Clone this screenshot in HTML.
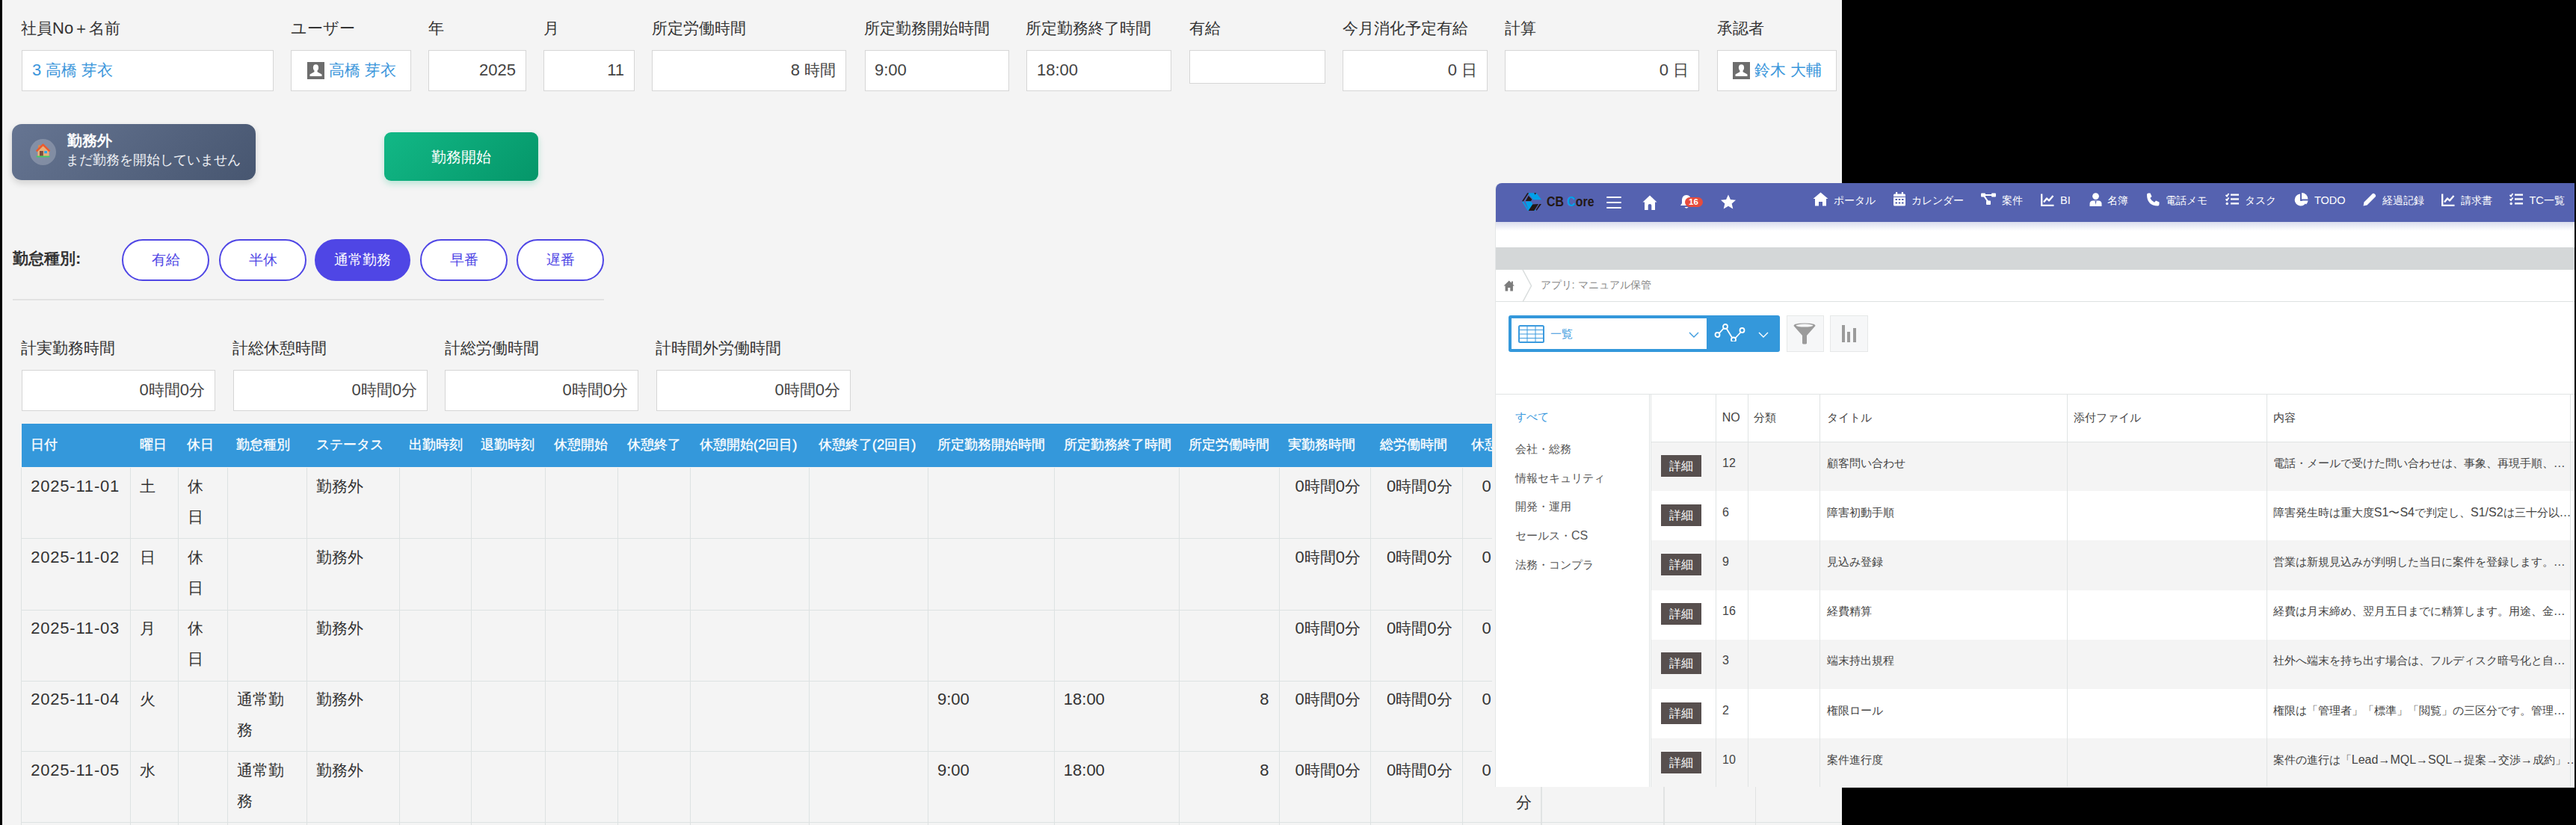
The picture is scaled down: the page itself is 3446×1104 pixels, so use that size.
<!DOCTYPE html>
<html><head><meta charset="utf-8">
<style>
*{box-sizing:border-box;margin:0;padding:0}
html,body{width:3446px;height:1104px;overflow:hidden;background:#f4f4f4;font-family:"Liberation Sans",sans-serif;color:#333}
.a{position:absolute;white-space:nowrap}
.lbl{position:absolute;font-size:22px;line-height:26px;color:#333;white-space:nowrap}
.inp{position:absolute;background:#fff;border:1.5px solid #d6d6d6;font-size:22px;line-height:26px;color:#444;white-space:nowrap}
.blue{color:#3b96db}
.uic{position:absolute;width:23px;height:23px;background:#6f6f6f}
.pill{position:absolute;top:320px;height:56px;width:117px;border:2.5px solid #4f46e5;border-radius:28px;color:#4f46e5;font-size:20px;line-height:51px;text-align:center;background:#fff}
.th{position:absolute;top:568px;height:57px;background:#3498db}
.tht{position:absolute;top:586px;font-size:18px;line-height:22px;color:#fff;white-space:nowrap}
.vl{position:absolute;width:1.5px;background:#e1e3e3}
.hl{position:absolute;height:1.5px;background:#e1e3e3}
.td{position:absolute;font-size:22px;line-height:41px;color:#333;white-space:nowrap}
.j{font-size:0.95em}
</style></head><body>
<!-- left black strip -->
<div class="a" style="left:0;top:0;width:3px;height:1104px;background:#000"></div>

<!-- top labels -->
<div class="lbl" style="left:28px;top:25px"><span class="j">社員</span>No<span class="j">＋名前</span></div>
<div class="lbl" style="left:389px;top:25px"><span class="j">ユーザー</span></div>
<div class="lbl" style="left:573px;top:25px"><span class="j">年</span></div>
<div class="lbl" style="left:727px;top:25px"><span class="j">月</span></div>
<div class="lbl" style="left:872px;top:25px"><span class="j">所定労働時間</span></div>
<div class="lbl" style="left:1156px;top:25px"><span class="j">所定勤務開始時間</span></div>
<div class="lbl" style="left:1372px;top:25px"><span class="j">所定勤務終了時間</span></div>
<div class="lbl" style="left:1591px;top:25px"><span class="j">有給</span></div>
<div class="lbl" style="left:1796px;top:25px"><span class="j">今月消化予定有給</span></div>
<div class="lbl" style="left:2013px;top:25px"><span class="j">計算</span></div>
<div class="lbl" style="left:2297px;top:25px"><span class="j">承認者</span></div>

<!-- top inputs -->
<div class="inp" style="left:29px;top:67px;width:337px;height:55px"><span class="a blue" style="left:13px;top:13px">3 <span class="j">高橋</span> <span class="j">芽衣</span></span></div>
<div class="inp" style="left:389px;top:67px;width:161px;height:55px"><svg class="a" style="left:20.8px;top:14.5px" width="23" height="23" viewBox="0 0 23 23"><rect width="23" height="23" fill="#6d6d6d"/><ellipse cx="11.5" cy="7.6" rx="3.6" ry="4.4" fill="#fff"/><path d="M9.6 11 L13.4 11 L13.6 13.3 L19.5 16.5 L19.5 19 L3.5 19 L3.5 16.5 L9.4 13.3 Z" fill="#fff"/></svg><span class="a blue" style="left:50px;top:13px"><span class="j">高橋</span> <span class="j">芽衣</span></span></div>
<div class="inp" style="left:573px;top:67px;width:131px;height:55px"><span class="a" style="right:13px;top:13px">2025</span></div>
<div class="inp" style="left:727px;top:67px;width:122px;height:55px"><span class="a" style="right:13px;top:13px">11</span></div>
<div class="inp" style="left:872px;top:67px;width:260px;height:55px"><span class="a" style="right:13px;top:13px">8 <span class="j">時間</span></span></div>
<div class="inp" style="left:1157px;top:67px;width:193px;height:55px"><span class="a" style="left:12px;top:13px">9:00</span></div>
<div class="inp" style="left:1373px;top:67px;width:194px;height:55px"><span class="a" style="left:13px;top:13px">18:00</span></div>
<div class="inp" style="left:1591px;top:67px;width:182px;height:45px"></div>
<div class="inp" style="left:1796px;top:67px;width:194px;height:55px"><span class="a" style="right:13px;top:13px">0 <span class="j">日</span></span></div>
<div class="inp" style="left:2013px;top:67px;width:260px;height:55px"><span class="a" style="right:13px;top:13px">0 <span class="j">日</span></span></div>
<div class="inp" style="left:2297px;top:67px;width:160px;height:55px"><svg class="a" style="left:20.3px;top:14.5px" width="23" height="23" viewBox="0 0 23 23"><rect width="23" height="23" fill="#6d6d6d"/><ellipse cx="11.5" cy="7.6" rx="3.6" ry="4.4" fill="#fff"/><path d="M9.6 11 L13.4 11 L13.6 13.3 L19.5 16.5 L19.5 19 L3.5 19 L3.5 16.5 L9.4 13.3 Z" fill="#fff"/></svg><span class="a blue" style="left:49px;top:13px"><span class="j">鈴木</span> <span class="j">大輔</span></span></div>

<!-- black top right -->
<div class="a" style="left:2464px;top:0;width:982px;height:245px;background:#000"></div>

<!-- status box -->
<div class="a" style="left:16px;top:166px;width:326px;height:75px;border-radius:13px;background:linear-gradient(135deg,#667592,#475670);box-shadow:0 4px 10px rgba(0,0,0,.15)"></div>
<div class="a" style="left:39.8px;top:185.5px;width:35.5px;height:35.5px;border-radius:50%;background:rgba(255,255,255,.22)"></div>
<svg class="a" style="left:40px;top:185px" width="36" height="33" viewBox="0 0 36 33"><rect x="11.2" y="9.2" width="2.6" height="4" fill="#e0894a"/><polygon points="17.6,10 25.6,17 25.6,24 10.4,24 10.4,17" fill="#e8b07a"/><path d="M8.8 17.4 L17.6 8.6 L26.4 17.4" stroke="#ec5a2c" stroke-width="2.5" fill="none" stroke-linejoin="round"/><rect x="13" y="17" width="4.8" height="6.8" fill="#7d4b3c"/><rect x="19.2" y="17" width="3.8" height="3.2" fill="#2ea6f2"/><rect x="8.8" y="23.6" width="17.8" height="1.8" fill="#3fcf62"/></svg>
<div class="a" style="left:90px;top:175px;font-size:21px;line-height:26px;color:#fff;font-weight:bold"><span class="j">勤務外</span></div>
<div class="a" style="left:88px;top:202px;font-size:19px;line-height:24px;color:#eef0f4"><span class="j">まだ勤務を開始していません</span></div>

<!-- green button -->
<div class="a" style="left:514px;top:177px;width:206px;height:65px;border-radius:9px;background:linear-gradient(135deg,#12b886,#059669);box-shadow:0 4px 8px rgba(16,185,129,.25);color:#fff;font-size:21px;line-height:65px;text-align:center"><span class="j">勤務開始</span></div>

<!-- kintai row -->
<div class="a" style="left:17px;top:332.5px;font-size:22px;line-height:26px;font-weight:bold;color:#333"><span class="j">勤怠種別</span>:</div>
<div class="pill" style="left:163px"><span class="j">有給</span></div>
<div class="pill" style="left:293px"><span class="j">半休</span></div>
<div class="pill" style="left:421px;width:128px;background:#4f46e5;color:#fff"><span class="j">通常勤務</span></div>
<div class="pill" style="left:562px"><span class="j">早番</span></div>
<div class="pill" style="left:691px"><span class="j">遅番</span></div>
<div class="a" style="left:17px;top:400px;width:791px;height:1.5px;background:#e2e2e2"></div>

<!-- totals -->
<div class="lbl" style="left:28px;top:453px"><span class="j">計実勤務時間</span></div>
<div class="lbl" style="left:311px;top:453px"><span class="j">計総休憩時間</span></div>
<div class="lbl" style="left:595px;top:453px"><span class="j">計総労働時間</span></div>
<div class="lbl" style="left:877px;top:453px"><span class="j">計時間外労働時間</span></div>
<div class="inp" style="left:29px;top:495px;width:259px;height:55px"><span class="a" style="right:13px;top:13px">0<span class="j">時間</span>0<span class="j">分</span></span></div>
<div class="inp" style="left:312px;top:495px;width:260px;height:55px"><span class="a" style="right:13px;top:13px">0<span class="j">時間</span>0<span class="j">分</span></span></div>
<div class="inp" style="left:595px;top:495px;width:259px;height:55px"><span class="a" style="right:13px;top:13px">0<span class="j">時間</span>0<span class="j">分</span></span></div>
<div class="inp" style="left:878px;top:495px;width:260px;height:55px"><span class="a" style="right:13px;top:13px">0<span class="j">時間</span>0<span class="j">分</span></span></div>

<div class="a" style="left:28.7px;top:567.3px;width:1967.6px;height:58.2px;background:#3498db;overflow:hidden"><span class="a" style="left:12.3px;top:17px;font-size:18.5px;line-height:22px;color:#fff;-webkit-text-stroke:0.35px #fff"><span class="j">日付</span></span><span class="a" style="left:158.1px;top:17px;font-size:18.5px;line-height:22px;color:#fff;-webkit-text-stroke:0.35px #fff"><span class="j">曜日</span></span><span class="a" style="left:221.8px;top:17px;font-size:18.5px;line-height:22px;color:#fff;-webkit-text-stroke:0.35px #fff"><span class="j">休日</span></span><span class="a" style="left:287.7px;top:17px;font-size:18.5px;line-height:22px;color:#fff;-webkit-text-stroke:0.35px #fff"><span class="j">勤怠種別</span></span><span class="a" style="left:394.3px;top:17px;font-size:18.5px;line-height:22px;color:#fff;-webkit-text-stroke:0.35px #fff"><span class="j">ステータス</span></span><span class="a" style="left:517.9px;top:17px;font-size:18.5px;line-height:22px;color:#fff;-webkit-text-stroke:0.35px #fff"><span class="j">出勤時刻</span></span><span class="a" style="left:614.2px;top:17px;font-size:18.5px;line-height:22px;color:#fff;-webkit-text-stroke:0.35px #fff"><span class="j">退勤時刻</span></span><span class="a" style="left:712.5px;top:17px;font-size:18.5px;line-height:22px;color:#fff;-webkit-text-stroke:0.35px #fff"><span class="j">休憩開始</span></span><span class="a" style="left:810.1px;top:17px;font-size:18.5px;line-height:22px;color:#fff;-webkit-text-stroke:0.35px #fff"><span class="j">休憩終了</span></span><span class="a" style="left:907.1px;top:17px;font-size:18.5px;line-height:22px;color:#fff;-webkit-text-stroke:0.35px #fff"><span class="j">休憩開始</span>(2<span class="j">回目</span>)</span><span class="a" style="left:1066.1px;top:17px;font-size:18.5px;line-height:22px;color:#fff;-webkit-text-stroke:0.35px #fff"><span class="j">休憩終了</span>(2<span class="j">回目</span>)</span><span class="a" style="left:1225.0px;top:17px;font-size:18.5px;line-height:22px;color:#fff;-webkit-text-stroke:0.35px #fff"><span class="j">所定勤務開始時間</span></span><span class="a" style="left:1393.9px;top:17px;font-size:18.5px;line-height:22px;color:#fff;-webkit-text-stroke:0.35px #fff"><span class="j">所定勤務終了時間</span></span><span class="a" style="left:1561.3px;top:17px;font-size:18.5px;line-height:22px;color:#fff;-webkit-text-stroke:0.35px #fff"><span class="j">所定労働時間</span></span><span class="a" style="left:1694.5px;top:17px;font-size:18.5px;line-height:22px;color:#fff;-webkit-text-stroke:0.35px #fff"><span class="j">実勤務時間</span></span><span class="a" style="left:1817.1px;top:17px;font-size:18.5px;line-height:22px;color:#fff;-webkit-text-stroke:0.35px #fff"><span class="j">総労働時間</span></span><span class="a" style="left:1939.7px;top:17px;font-size:18.5px;line-height:22px;color:#fff;-webkit-text-stroke:0.35px #fff"><span class="j">休憩時間</span></span></div><div class="td" style="left:41.2px;top:629.5px"><span style="letter-spacing:0.8px">2025-11-01</span></div><div class="td" style="left:187.0px;top:629.5px"><span class="j">土</span></div><div class="td" style="left:250.7px;top:629.5px"><span class="j">休</span><br><span class="j">日</span></div><div class="td" style="left:423.2px;top:629.5px"><span class="j">勤務外</span></div><div class="td" style="right:1626.0px;top:629.5px;text-align:right">0<span class="j">時間</span>0<span class="j">分</span></div><div class="td" style="right:1503.4px;top:629.5px;text-align:right">0<span class="j">時間</span>0<span class="j">分</span></div><div class="td" style="left:1982.5px;top:629.5px">0</div><div class="td" style="left:41.2px;top:724.5px"><span style="letter-spacing:0.8px">2025-11-02</span></div><div class="td" style="left:187.0px;top:724.5px"><span class="j">日</span></div><div class="td" style="left:250.7px;top:724.5px"><span class="j">休</span><br><span class="j">日</span></div><div class="td" style="left:423.2px;top:724.5px"><span class="j">勤務外</span></div><div class="td" style="right:1626.0px;top:724.5px;text-align:right">0<span class="j">時間</span>0<span class="j">分</span></div><div class="td" style="right:1503.4px;top:724.5px;text-align:right">0<span class="j">時間</span>0<span class="j">分</span></div><div class="td" style="left:1982.5px;top:724.5px">0</div><div class="td" style="left:41.2px;top:819.5px"><span style="letter-spacing:0.8px">2025-11-03</span></div><div class="td" style="left:187.0px;top:819.5px"><span class="j">月</span></div><div class="td" style="left:250.7px;top:819.5px"><span class="j">休</span><br><span class="j">日</span></div><div class="td" style="left:423.2px;top:819.5px"><span class="j">勤務外</span></div><div class="td" style="right:1626.0px;top:819.5px;text-align:right">0<span class="j">時間</span>0<span class="j">分</span></div><div class="td" style="right:1503.4px;top:819.5px;text-align:right">0<span class="j">時間</span>0<span class="j">分</span></div><div class="td" style="left:1982.5px;top:819.5px">0</div><div class="td" style="left:41.2px;top:914.6px"><span style="letter-spacing:0.8px">2025-11-04</span></div><div class="td" style="left:187.0px;top:914.6px"><span class="j">火</span></div><div class="td" style="left:316.6px;top:914.6px"><span class="j">通常勤</span><br><span class="j">務</span></div><div class="td" style="left:423.2px;top:914.6px"><span class="j">勤務外</span></div><div class="td" style="left:1253.9px;top:914.6px">9:00</div><div class="td" style="left:1422.8px;top:914.6px">18:00</div><div class="td" style="right:1748.6px;top:914.6px;text-align:right">8</div><div class="td" style="right:1626.0px;top:914.6px;text-align:right">0<span class="j">時間</span>0<span class="j">分</span></div><div class="td" style="right:1503.4px;top:914.6px;text-align:right">0<span class="j">時間</span>0<span class="j">分</span></div><div class="td" style="left:1982.5px;top:914.6px">0</div><div class="td" style="left:41.2px;top:1009.6px"><span style="letter-spacing:0.8px">2025-11-05</span></div><div class="td" style="left:187.0px;top:1009.6px"><span class="j">水</span></div><div class="td" style="left:316.6px;top:1009.6px"><span class="j">通常勤</span><br><span class="j">務</span></div><div class="td" style="left:423.2px;top:1009.6px"><span class="j">勤務外</span></div><div class="td" style="left:1253.9px;top:1009.6px">9:00</div><div class="td" style="left:1422.8px;top:1009.6px">18:00</div><div class="td" style="right:1748.6px;top:1009.6px;text-align:right">8</div><div class="td" style="right:1626.0px;top:1009.6px;text-align:right">0<span class="j">時間</span>0<span class="j">分</span></div><div class="td" style="right:1503.4px;top:1009.6px;text-align:right">0<span class="j">時間</span>0<span class="j">分</span></div><div class="td" style="left:1982.5px;top:1009.6px">0</div><div class="a" style="left:28px;top:625.5px;width:1px;height:478.5px;background:#dde2e2"></div><div class="a" style="left:174px;top:625.5px;width:1px;height:478.5px;background:#dde2e2"></div><div class="a" style="left:238px;top:625.5px;width:1px;height:478.5px;background:#dde2e2"></div><div class="a" style="left:304px;top:625.5px;width:1px;height:478.5px;background:#dde2e2"></div><div class="a" style="left:410px;top:625.5px;width:1px;height:478.5px;background:#dde2e2"></div><div class="a" style="left:534px;top:625.5px;width:1px;height:478.5px;background:#dde2e2"></div><div class="a" style="left:630px;top:625.5px;width:1px;height:478.5px;background:#dde2e2"></div><div class="a" style="left:729px;top:625.5px;width:1px;height:478.5px;background:#dde2e2"></div><div class="a" style="left:826px;top:625.5px;width:1px;height:478.5px;background:#dde2e2"></div><div class="a" style="left:923px;top:625.5px;width:1px;height:478.5px;background:#dde2e2"></div><div class="a" style="left:1082px;top:625.5px;width:1px;height:478.5px;background:#dde2e2"></div><div class="a" style="left:1241px;top:625.5px;width:1px;height:478.5px;background:#dde2e2"></div><div class="a" style="left:1410px;top:625.5px;width:1px;height:478.5px;background:#dde2e2"></div><div class="a" style="left:1577px;top:625.5px;width:1px;height:478.5px;background:#dde2e2"></div><div class="a" style="left:1711px;top:625.5px;width:1px;height:478.5px;background:#dde2e2"></div><div class="a" style="left:1833px;top:625.5px;width:1px;height:478.5px;background:#dde2e2"></div><div class="a" style="left:1956px;top:625.5px;width:1px;height:478.5px;background:#dde2e2"></div><div class="a" style="left:28.7px;top:720px;width:1967.6px;height:1px;background:#dde2e2"></div><div class="a" style="left:28.7px;top:816px;width:1967.6px;height:1px;background:#dde2e2"></div><div class="a" style="left:28.7px;top:911px;width:1967.6px;height:1px;background:#dde2e2"></div><div class="a" style="left:28.7px;top:1005px;width:1967.6px;height:1px;background:#dde2e2"></div><div class="a" style="left:28.7px;top:1100px;width:1967.6px;height:1px;background:#dde2e2"></div><div class="a" style="left:1996.3px;top:1053px;width:468px;height:51px;background:#f4f4f4"></div><div class="vl" style="left:2061.0px;top:1053px;height:51px"></div><div class="vl" style="left:2225.0px;top:1053px;height:51px"></div><div class="vl" style="left:2347.5px;top:1053px;height:51px"></div><div class="a" style="left:1996px;top:1100px;width:468px;height:1px;background:#dde2e2"></div><div class="td" style="left:2028px;top:1052.5px"><span class="j">分</span></div><div class="a" style="left:2464px;top:1054px;width:982px;height:50px;background:#000"></div>
<div class="a" style="left:2001px;top:245px;width:1443.0px;height:808.3px;background:#fff;overflow:hidden;border-top-left-radius:8px;box-shadow:-1px 0 0 #e4e6e6"><div class="a" style="left:0;top:0;width:100%;height:51.5px;background:#5562b0"></div><div class="a" style="left:0;top:51.5px;width:100%;height:12px;background:linear-gradient(rgba(85,98,176,.22),rgba(85,98,176,0))"></div><svg class="a" style="left:34.9px;top:12.9px" width="26.4" height="24.2" viewBox="135 135 605 555">
<g fill="#00a0e9"><polygon points="310,140 505,140 540,192 575,140 740,350 480,350"/><polygon points="135,405 180,405 360,690 315,690"/><polygon points="240,405 420,405 470,490 345,675"/><polygon points="505,630 560,690 500,690"/></g>
<g fill="#231815"><polygon points="135,392 300,140 345,140 180,392"/><polygon points="245,390 335,225 440,335 410,390"/><polygon points="460,490 640,482 505,690 330,690"/><polygon points="672,480 732,480 585,682 560,662"/><polygon points="505,140 575,140 540,192"/></g>
</svg><div class="a" style="left:67.5px;top:13px;font-size:19px;line-height:24px;font-weight:bold;color:#231815;transform:scaleX(0.835);transform-origin:0 0">CB <span style="color:#00a0e9">C</span>ore</div><div class="a" style="left:148px;top:18.0px;width:20px;height:1.7px;background:#fff;border-radius:1px"></div><div class="a" style="left:148px;top:25.0px;width:20px;height:1.7px;background:#fff;border-radius:1px"></div><div class="a" style="left:148px;top:32.0px;width:20px;height:1.7px;background:#fff;border-radius:1px"></div><svg class="a" style="left:195.5px;top:15.5px" width="20" height="20" viewBox="0 0 20 20"><path d="M10 0.5 L19.5 9.5 L17 9.5 L17 20 L12.3 20 L12.3 14 Q12.3 12 10 12 Q7.7 12 7.7 14 L7.7 20 L3 20 L3 9.5 L0.5 9.5 Z" fill="#fff"/></svg><svg class="a" style="left:246px;top:15px" width="18" height="21" viewBox="0 0 18 21"><path d="M9 1 C5 1 3 4 3 8 L3 12 L1 15 L17 15 L15 12 L15 8 C15 4 13 1 9 1Z M6.5 17 Q9 20.5 11.5 17Z" fill="#fff"/></svg><div class="a" style="left:252.5px;top:19px;width:24px;height:13px;border-radius:7px;background:#e74c3c;color:#fff;font-size:11.5px;line-height:13px;text-align:center;font-weight:bold">16</div><svg class="a" style="left:299.5px;top:14.5px" width="22" height="21" viewBox="0 0 24 23"><path d="M12 0.5 L15.2 7.6 L23 8.4 L17.1 13.6 L18.9 21.3 L12 17.2 L5.1 21.3 L6.9 13.6 L1 8.4 L8.8 7.6 Z" fill="#fff"/></svg><svg class="a" style="left:424.4px;top:12.3px" width="21" height="19" viewBox="0 0 21 19"><path d="M10.5 0.5 L20.5 9 L18 9 L18 18.5 L13 18.5 L13 13 L8 13 L8 18.5 L3 18.5 L3 9 L0.5 9 Z" fill="#fff"/></svg><div class="a" style="left:451.9px;top:14px;font-size:14.5px;line-height:18px;color:#fff"><span class="j">ポータル</span></div><svg class="a" style="left:531.8px;top:12.3px" width="16" height="19" viewBox="0 0 16 19"><rect x="3" y="0" width="2.2" height="4" fill="#fff"/><rect x="10.8" y="0" width="2.2" height="4" fill="#fff"/><rect x="0" y="2.5" width="16" height="16" rx="1.5" fill="#fff"/><rect x="0" y="6" width="16" height="1" fill="#5562b0"/><g fill="#5562b0"><rect x="2.5" y="9" width="2.5" height="2"/><rect x="6.75" y="9" width="2.5" height="2"/><rect x="11" y="9" width="2.5" height="2"/><rect x="2.5" y="13.5" width="2.5" height="2"/><rect x="6.75" y="13.5" width="2.5" height="2"/><rect x="11" y="13.5" width="2.5" height="2"/></g></svg><div class="a" style="left:555.5px;top:14px;font-size:14.5px;line-height:18px;color:#fff"><span class="j">カレンダー</span></div><svg class="a" style="left:649.0px;top:13.3px" width="20" height="17" viewBox="0 0 20 17"><rect x="0" y="0.5" width="6" height="5" rx="1" fill="#fff"/><rect x="14" y="0.5" width="6" height="5" rx="1" fill="#fff"/><rect x="7" y="10.5" width="6" height="5.5" rx="1" fill="#fff"/><path d="M5 3 L15 3 M4 4 L9.5 12" stroke="#fff" stroke-width="2.2" fill="none"/></svg><div class="a" style="left:676.6px;top:14px;font-size:14.5px;line-height:18px;color:#fff"><span class="j">案件</span></div><svg class="a" style="left:728.8px;top:13.8px" width="18" height="17" viewBox="0 0 18 17"><path d="M1.2 0.5 L1.2 15.8 L17.5 15.8" stroke="#fff" stroke-width="2.3" fill="none"/><path d="M4 11.5 L8 6.5 L11 9.5 L16.5 3" stroke="#fff" stroke-width="2.3" fill="none" stroke-linejoin="round"/></svg><div class="a" style="left:755.0px;top:14px;font-size:14.5px;line-height:18px;color:#fff">BI</div><svg class="a" style="left:794.0px;top:12.8px" width="17" height="18" viewBox="0 0 17 18"><circle cx="8.5" cy="4.6" r="4.4" fill="#fff"/><path d="M0.5 18 L0.5 15 Q0.5 10.5 5 10.5 L12 10.5 Q16.5 10.5 16.5 15 L16.5 18 Z" fill="#fff"/><path d="M7.5 11 L8.5 16 L9.5 11Z" fill="#5562b0"/></svg><div class="a" style="left:817.7px;top:14px;font-size:14.5px;line-height:18px;color:#fff"><span class="j">名簿</span></div><svg class="a" style="left:870.0px;top:12.8px" width="18" height="18" viewBox="0 0 18 18"><path d="M1 2.5 Q1 0.5 3 0.5 L5.5 0.5 L7.5 5 L5.3 7 Q7 11 11 12.7 L13 10.5 L17.5 12.5 L17.5 15 Q17.5 17.5 15.5 17.5 Q1 17 1 2.5Z" fill="#fff"/></svg><div class="a" style="left:896.0px;top:14px;font-size:14.5px;line-height:18px;color:#fff"><span class="j">電話メモ</span></div><svg class="a" style="left:975.6px;top:13.3px" width="18" height="17" viewBox="0 0 18 17"><path d="M0.5 3 L2 4.5 L4.5 1 M0.5 8.5 L2 10 L4.5 6.5" stroke="#fff" stroke-width="1.8" fill="none"/><circle cx="2.2" cy="14.5" r="1.7" fill="#fff"/><rect x="7" y="1.5" width="11" height="2.3" fill="#fff"/><rect x="7" y="7.3" width="11" height="2.3" fill="#fff"/><rect x="7" y="13.2" width="11" height="2.3" fill="#fff"/></svg><div class="a" style="left:1001.6px;top:14px;font-size:14.5px;line-height:18px;color:#fff"><span class="j">タスク</span></div><svg class="a" style="left:1068.0px;top:12.8px" width="19" height="18" viewBox="0 0 19 18"><path d="M8 1.5 A8 8 0 1 0 16.5 11 L8 11 Z" fill="#fff"/><path d="M10 0 A8.5 8.5 0 0 1 18.5 8.5 L10 8.5Z" fill="#fff"/><path d="M10.5 10.5 L18.5 10.5 A8 8 0 0 1 16 15.5Z" fill="#fff"/></svg><div class="a" style="left:1095.0px;top:14px;font-size:14.5px;line-height:18px;color:#fff">TODO</div><svg class="a" style="left:1159.5px;top:12.8px" width="18" height="18" viewBox="0 0 18 18"><path d="M0.5 17.5 L1.5 12.5 L12.5 1.5 Q14 0 15.5 1.5 L16.5 2.5 Q18 4 16.5 5.5 L5.5 16.5 Z" fill="#fff"/></svg><div class="a" style="left:1185.5px;top:14px;font-size:14.5px;line-height:18px;color:#fff"><span class="j">経過記録</span></div><svg class="a" style="left:1264.6px;top:13.8px" width="18" height="17" viewBox="0 0 18 17"><path d="M1.2 0.5 L1.2 15.8 L17.5 15.8" stroke="#fff" stroke-width="2.3" fill="none"/><path d="M4 11.5 L8 6.5 L11 9.5 L16.5 3" stroke="#fff" stroke-width="2.3" fill="none" stroke-linejoin="round"/></svg><div class="a" style="left:1290.7px;top:14px;font-size:14.5px;line-height:18px;color:#fff"><span class="j">請求書</span></div><svg class="a" style="left:1356.4px;top:13.3px" width="18" height="17" viewBox="0 0 18 17"><path d="M0.5 3 L2 4.5 L4.5 1 M0.5 8.5 L2 10 L4.5 6.5" stroke="#fff" stroke-width="1.8" fill="none"/><circle cx="2.2" cy="14.5" r="1.7" fill="#fff"/><rect x="7" y="1.5" width="11" height="2.3" fill="#fff"/><rect x="7" y="7.3" width="11" height="2.3" fill="#fff"/><rect x="7" y="13.2" width="11" height="2.3" fill="#fff"/></svg><div class="a" style="left:1382.5px;top:14px;font-size:14.5px;line-height:18px;color:#fff">TC<span class="j">一覧</span></div><div class="a" style="left:0;top:86px;width:100%;height:29.8px;background:#d4d7d8"></div><div class="a" style="left:0;top:158px;width:100%;height:1px;background:#dde1e1"></div><svg class="a" style="left:10px;top:129.5px" width="15.5" height="15" viewBox="0 0 15 15" preserveAspectRatio="none"><path d="M7.5 0.5 L14.5 7.5 L12.5 7.5 L12.5 14.5 L9 14.5 L9 10 L6 10 L6 14.5 L2.5 14.5 L2.5 7.5 L0.5 7.5 Z" fill="#7c7c7c"/><rect x="10.5" y="1.5" width="2" height="4" fill="#7c7c7c"/></svg><svg class="a" style="left:35px;top:115.5px" width="16" height="43" viewBox="0 0 16 43"><path d="M1 0 L12.5 21.5 L1 43" stroke="#d9dddd" stroke-width="1.5" fill="none"/></svg><div class="a" style="left:59.5px;top:127px;font-size:15px;line-height:18px;color:#888"><span class="j">アプリ</span>: <span class="j">マニュアル保管</span></div><div class="a" style="left:17px;top:176.6px;width:362.5px;height:49.8px;background:#3498db;border-radius:3px"></div><div class="a" style="left:21.3px;top:181px;width:260.3px;height:40.5px;background:#fff"></div><svg class="a" style="left:30px;top:189.8px" width="35" height="24" viewBox="0 0 35 24"><rect x="1" y="1" width="33" height="22" rx="1.5" fill="none" stroke="#3b9ade" stroke-width="2"/><path d="M1 6.5 H34 M1 12 H34 M1 17.5 H34 M12 1 V23 M23 1 V23" stroke="#3b9ade" stroke-width="1" fill="none"/></svg><div class="a" style="left:72.5px;top:192px;font-size:16px;line-height:19px;color:#3b9ade"><span class="j">一覧</span></div><svg class="a" style="left:257.5px;top:199px" width="14" height="8" viewBox="0 0 14 8"><path d="M1 1 L7 7 L13 1" stroke="#3b9ade" stroke-width="1.4" fill="none"/></svg><svg class="a" style="left:292px;top:188px" width="42" height="24" viewBox="0 0 42 24"><path d="M5 15 L15 4 L26 22 L38 9" stroke="#fff" stroke-width="1.8" fill="none"/><g fill="#3498db" stroke="#fff" stroke-width="1.8"><circle cx="4.5" cy="15" r="3"/><circle cx="15" cy="4" r="3"/><circle cx="26" cy="21.5" r="3"/><circle cx="37.5" cy="9" r="3"/></g></svg><svg class="a" style="left:350.5px;top:199px" width="14" height="8" viewBox="0 0 14 8"><path d="M1 1 L7 7 L13 1" stroke="#fff" stroke-width="1.4" fill="none"/></svg><div class="a" style="left:388.6px;top:176.6px;width:50.2px;height:49.8px;background:#f6f7f8;border:1.5px solid #e6e8e8"></div><div class="a" style="left:447.4px;top:176.6px;width:50.2px;height:49.8px;background:#f6f7f8;border:1.5px solid #e6e8e8"></div><svg class="a" style="left:398.4px;top:186.6px" width="30" height="29" viewBox="0 0 30 29"><path d="M0.5 4 Q0.5 0.5 15 0.5 Q29.5 0.5 29.5 4 L18 17 L18 27 Q18 28.5 15 28.5 Q12 28.5 12 27 L12 17 Z" fill="#9b9b9b"/><ellipse cx="15" cy="3.6" rx="11.5" ry="2" fill="#f6f7f8"/></svg><div class="a" style="left:462.7px;top:189.9px;width:4.3px;height:23.1px;background:#9b9b9b"></div><div class="a" style="left:470.2px;top:199.3px;width:4.3px;height:13.7px;background:#9b9b9b"></div><div class="a" style="left:478px;top:193.8px;width:4.3px;height:19.2px;background:#9b9b9b"></div><div class="a" style="left:0;top:282px;width:100%;height:1px;background:#e0e4e4"></div><div class="a" style="left:205px;top:282px;width:1px;height:600px;background:#e0e4e4"></div><div class="a" style="left:207px;top:282px;width:1px;height:600px;background:#e0e4e4"></div><div class="a" style="left:26px;top:303.0px;font-size:16px;line-height:20px;color:#3b9ade"><span class="j">すべて</span></div><div class="a" style="left:26px;top:346.0px;font-size:16px;line-height:20px;color:#555"><span class="j">会社・総務</span></div><div class="a" style="left:26px;top:384.5px;font-size:16px;line-height:20px;color:#555"><span class="j">情報セキュリティ</span></div><div class="a" style="left:26px;top:423.0px;font-size:16px;line-height:20px;color:#555"><span class="j">開発・運用</span></div><div class="a" style="left:26px;top:462.0px;font-size:16px;line-height:20px;color:#555"><span class="j">セールス・</span>CS</div><div class="a" style="left:26px;top:501.0px;font-size:16px;line-height:20px;color:#555"><span class="j">法務・コンプラ</span></div><div class="a" style="left:207.7px;top:346.0px;width:1235.3px;height:66.7px;background:#f4f4f4"></div><div class="a" style="left:220.8px;top:363.5px;width:54.3px;height:29px;background:#574f4e;color:#fff;font-size:17px;line-height:28px;text-align:center"><span class="j">詳細</span></div><div class="a" style="left:303.0px;top:364.5px;font-size:16px;line-height:20px;color:#444">12</div><div class="a" style="left:442.5px;top:364.5px;font-size:16px;line-height:20px;color:#444"><span class="j">顧客問い合わせ</span></div><div class="a" style="left:1039.8px;top:364.5px;font-size:16px;line-height:20px;color:#444"><span class="j">電話・メールで受けた問い合わせは、事象、再現手順、</span>…</div><div class="a" style="left:207.7px;top:412.2px;width:1235.3px;height:66.7px;background:#fff"></div><div class="a" style="left:220.8px;top:429.7px;width:54.3px;height:29px;background:#574f4e;color:#fff;font-size:17px;line-height:28px;text-align:center"><span class="j">詳細</span></div><div class="a" style="left:303.0px;top:430.7px;font-size:16px;line-height:20px;color:#444">6</div><div class="a" style="left:442.5px;top:430.7px;font-size:16px;line-height:20px;color:#444"><span class="j">障害初動手順</span></div><div class="a" style="left:1039.8px;top:430.7px;font-size:16px;line-height:20px;color:#444"><span class="j">障害発生時は重大度</span>S1<span class="j">〜</span>S4<span class="j">で判定し、</span>S1/S2<span class="j">は三十分以</span>…</div><div class="a" style="left:207.7px;top:478.4px;width:1235.3px;height:66.7px;background:#f4f4f4"></div><div class="a" style="left:220.8px;top:495.9px;width:54.3px;height:29px;background:#574f4e;color:#fff;font-size:17px;line-height:28px;text-align:center"><span class="j">詳細</span></div><div class="a" style="left:303.0px;top:496.9px;font-size:16px;line-height:20px;color:#444">9</div><div class="a" style="left:442.5px;top:496.9px;font-size:16px;line-height:20px;color:#444"><span class="j">見込み登録</span></div><div class="a" style="left:1039.8px;top:496.9px;font-size:16px;line-height:20px;color:#444"><span class="j">営業は新規見込みが判明した当日に案件を登録します。</span>…</div><div class="a" style="left:207.7px;top:544.6px;width:1235.3px;height:66.7px;background:#fff"></div><div class="a" style="left:220.8px;top:562.1px;width:54.3px;height:29px;background:#574f4e;color:#fff;font-size:17px;line-height:28px;text-align:center"><span class="j">詳細</span></div><div class="a" style="left:303.0px;top:563.1px;font-size:16px;line-height:20px;color:#444">16</div><div class="a" style="left:442.5px;top:563.1px;font-size:16px;line-height:20px;color:#444"><span class="j">経費精算</span></div><div class="a" style="left:1039.8px;top:563.1px;font-size:16px;line-height:20px;color:#444"><span class="j">経費は月末締め、翌月五日までに精算します。用途、金</span>…</div><div class="a" style="left:207.7px;top:610.8px;width:1235.3px;height:66.7px;background:#f4f4f4"></div><div class="a" style="left:220.8px;top:628.3px;width:54.3px;height:29px;background:#574f4e;color:#fff;font-size:17px;line-height:28px;text-align:center"><span class="j">詳細</span></div><div class="a" style="left:303.0px;top:629.3px;font-size:16px;line-height:20px;color:#444">3</div><div class="a" style="left:442.5px;top:629.3px;font-size:16px;line-height:20px;color:#444"><span class="j">端末持出規程</span></div><div class="a" style="left:1039.8px;top:629.3px;font-size:16px;line-height:20px;color:#444"><span class="j">社外へ端末を持ち出す場合は、フルディスク暗号化と自</span>…</div><div class="a" style="left:207.7px;top:677.0px;width:1235.3px;height:66.7px;background:#fff"></div><div class="a" style="left:220.8px;top:694.5px;width:54.3px;height:29px;background:#574f4e;color:#fff;font-size:17px;line-height:28px;text-align:center"><span class="j">詳細</span></div><div class="a" style="left:303.0px;top:695.5px;font-size:16px;line-height:20px;color:#444">2</div><div class="a" style="left:442.5px;top:695.5px;font-size:16px;line-height:20px;color:#444"><span class="j">権限ロール</span></div><div class="a" style="left:1039.8px;top:695.5px;font-size:16px;line-height:20px;color:#444"><span class="j">権限は「管理者」「標準」「閲覧」の三区分です。管理</span>…</div><div class="a" style="left:207.7px;top:743.2px;width:1235.3px;height:66.7px;background:#f4f4f4"></div><div class="a" style="left:220.8px;top:760.7px;width:54.3px;height:29px;background:#574f4e;color:#fff;font-size:17px;line-height:28px;text-align:center"><span class="j">詳細</span></div><div class="a" style="left:303.0px;top:761.7px;font-size:16px;line-height:20px;color:#444">10</div><div class="a" style="left:442.5px;top:761.7px;font-size:16px;line-height:20px;color:#444"><span class="j">案件進行度</span></div><div class="a" style="left:1039.8px;top:761.7px;font-size:16px;line-height:20px;color:#444"><span class="j">案件の進行は「</span>Lead→MQL→SQL→<span class="j">提案</span>→<span class="j">交渉</span>→<span class="j">成約」</span>…</div><div class="a" style="left:207.7px;top:346px;width:1235.3px;height:1px;background:#e0e4e4"></div><div class="a" style="left:207px;top:282.0px;width:1px;height:600px;background:#e0e4e4"></div><div class="a" style="left:294px;top:282.0px;width:1px;height:600px;background:#e0e4e4"></div><div class="a" style="left:337px;top:282.0px;width:1px;height:600px;background:#e0e4e4"></div><div class="a" style="left:433px;top:282.0px;width:1px;height:600px;background:#e0e4e4"></div><div class="a" style="left:764px;top:282.0px;width:1px;height:600px;background:#e0e4e4"></div><div class="a" style="left:1031px;top:282.0px;width:1px;height:600px;background:#e0e4e4"></div><div class="a" style="left:1437px;top:282.0px;width:1px;height:600px;background:#e0e4e4"></div><div class="a" style="left:302.8px;top:304.4px;font-size:16px;line-height:20px;color:#444">NO</div><div class="a" style="left:345.0px;top:304.4px;font-size:16px;line-height:20px;color:#444"><span class="j">分類</span></div><div class="a" style="left:442.8px;top:304.4px;font-size:16px;line-height:20px;color:#444"><span class="j">タイトル</span></div><div class="a" style="left:772.5px;top:304.4px;font-size:16px;line-height:20px;color:#444"><span class="j">添付ファイル</span></div><div class="a" style="left:1039.7px;top:304.4px;font-size:16px;line-height:20px;color:#444"><span class="j">内容</span></div></div><div class="a" style="left:3444px;top:245px;width:2px;height:810px;background:#000"></div>
</body></html>
